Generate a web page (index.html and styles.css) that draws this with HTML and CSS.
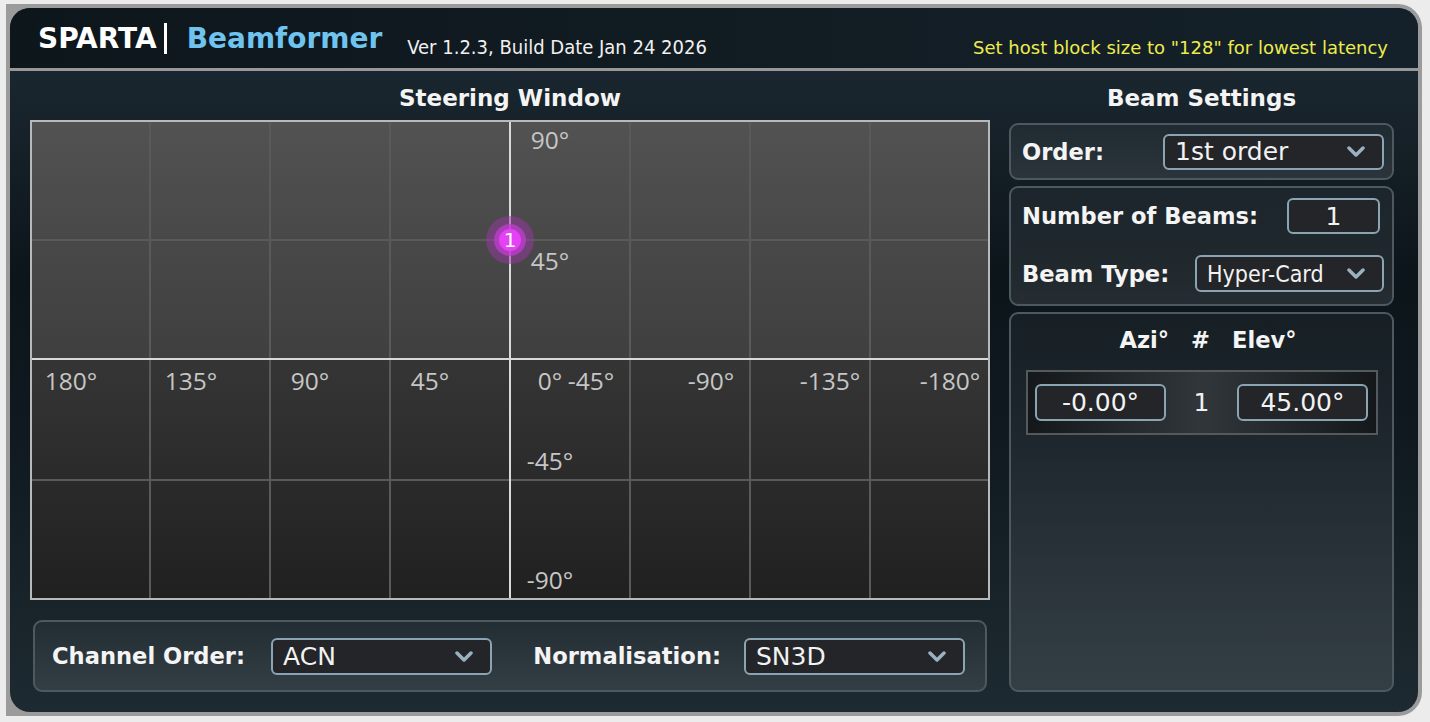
FILE: index.html
```html
<!DOCTYPE html>
<html lang="en">
<head>
    <meta charset="UTF-8">
    <title>SPARTA Beamformer</title>
    <link rel="stylesheet" href="styles.css">
</head>
<body>
    <div class="window">
        <div class="app">
            <!-- Title bar -->
            <header class="titlebar">
                <div class="brand">
                    <span class="sparta">SPARTA</span>
                    <span class="bar"></span>
                    <span class="plugin">Beamformer</span>
                    <span class="version">Ver 1.2.3, Build Date Jan 24 2026</span>
                </div>
                <div class="hint">Set host block size to "128" for lowest latency</div>
            </header>

            <main class="content">
                <!-- Steering window -->
                <section class="steering">
                    <h2>Steering Window</h2>
                    <svg class="sphere" width="960" height="480" viewBox="0 0 960 480">
                        <defs>
                            <linearGradient id="upper" x1="0" y1="0" x2="0" y2="1">
                                <stop offset="0" stop-color="#525252"/>
                                <stop offset="1" stop-color="#3f3f3f"/>
                            </linearGradient>
                            <linearGradient id="lower" x1="0" y1="0" x2="0" y2="1">
                                <stop offset="0" stop-color="#353535"/>
                                <stop offset="1" stop-color="#202020"/>
                            </linearGradient>
                        </defs>
                        <rect x="0" y="0" width="960" height="240" fill="url(#upper)"/>
                        <rect x="0" y="240" width="960" height="240" fill="url(#lower)"/>
                        <g stroke="#5a5a5a" stroke-width="2">
                            <line x1="120" y1="0" x2="120" y2="480"/>
                            <line x1="240" y1="0" x2="240" y2="480"/>
                            <line x1="360" y1="0" x2="360" y2="480"/>
                            <line x1="600" y1="0" x2="600" y2="480"/>
                            <line x1="720" y1="0" x2="720" y2="480"/>
                            <line x1="840" y1="0" x2="840" y2="480"/>
                            <line x1="0" y1="120" x2="960" y2="120"/>
                            <line x1="0" y1="360" x2="960" y2="360"/>
                        </g>
                        <g stroke="#d9d9d9" stroke-width="2">
                            <line x1="480" y1="0" x2="480" y2="480"/>
                            <line x1="0" y1="239" x2="960" y2="239"/>
                        </g>
                        <rect x="1" y="1" width="958" height="478" fill="none" stroke="#b9b9b9" stroke-width="2"/>
                        <g class="axis-label" text-anchor="middle">
                            <text x="41" y="270">180°</text>
                            <text x="161" y="270">135°</text>
                            <text x="280" y="270">90°</text>
                            <text x="400" y="270">45°</text>
                            <text x="520" y="270">0°</text>
                            <text x="561" y="270">-45°</text>
                            <text x="681" y="270">-90°</text>
                            <text x="800" y="270">-135°</text>
                            <text x="920" y="270">-180°</text>
                            <text x="520" y="29">90°</text>
                            <text x="520" y="150">45°</text>
                            <text x="520" y="350">-45°</text>
                            <text x="520" y="469">-90°</text>
                        </g>
                        <g class="beam">
                            <circle cx="480" cy="120" r="24" fill="#9a38a4" fill-opacity="0.5"/>
                            <circle cx="480" cy="120" r="16" fill="#c23cd2" fill-opacity="0.75"/>
                            <circle cx="480" cy="120" r="11" fill="#e442f4"/>
                            <text x="480" y="127" text-anchor="middle">1</text>
                        </g>
                    </svg>

                    <div class="panel io-panel">
                        <div class="field-group">
                            <span class="lbl">Channel Order:</span>
                            <div class="box combo wide gap-a">
                                <span>ACN</span>
                                <svg class="chev" width="18" height="11" viewBox="0 0 18 11"><path d="M2 2 L9 9 L16 2"/></svg>
                            </div>
                        </div>
                        <div class="field-group">
                            <span class="lbl">Normalisation:</span>
                            <div class="box combo wide gap-b">
                                <span>SN3D</span>
                                <svg class="chev" width="18" height="11" viewBox="0 0 18 11"><path d="M2 2 L9 9 L16 2"/></svg>
                            </div>
                        </div>
                    </div>
                </section>

                <!-- Beam settings -->
                <aside class="settings">
                    <h2>Beam Settings</h2>

                    <div class="panel order-panel">
                        <span class="lbl">Order:</span>
                        <div class="box combo wide short">
                            <span>1st order</span>
                            <svg class="chev" width="18" height="11" viewBox="0 0 18 11"><path d="M2 2 L9 9 L16 2"/></svg>
                        </div>
                    </div>

                    <div class="panel beams-panel">
                        <div class="row">
                            <span class="lbl">Number of Beams:</span>
                            <div class="box value num-box">1</div>
                        </div>
                        <div class="row">
                            <span class="lbl">Beam Type:</span>
                            <div class="box combo type-box">
                                <span class="narrow">Hyper-Card</span>
                                <svg class="chev" width="18" height="11" viewBox="0 0 18 11"><path d="M2 2 L9 9 L16 2"/></svg>
                            </div>
                        </div>
                    </div>

                    <div class="panel angles-panel">
                        <div class="angle-head">
                            <span>Azi°</span>
                            <span>#</span>
                            <span>Elev°</span>
                        </div>
                        <div class="angle-table">
                            <div class="box value angle-box">-0.00°</div>
                            <span class="beam-no">1</span>
                            <div class="box value angle-box">45.00°</div>
                        </div>
                    </div>
                </aside>
            </main>
        </div>
    </div>
</body>
</html>
```

FILE: styles.css
```css
body {
    margin: 0;
    padding: 4px 0 0 6px;
    background: #ececec;
    font-family: "DejaVu Sans", sans-serif;
    color: #f4f4f4;
}
.window {
    width: 1416px;
    height: 712px;
    box-sizing: border-box;
    padding: 4px;
    background: #9b9b9b;
    border-radius: 0 24px 24px 0;
}
.app {
    height: 100%;
    border-radius: 20px;
    overflow: hidden;
    display: flex;
    flex-direction: column;
    background: linear-gradient(180deg, #1f2c36 0%, #0c151a 38%, #0f191f 60%, #1e2a31 100%);
}

/* title bar */
.titlebar {
    height: 60px;
    flex: none;
    display: flex;
    align-items: center;
    justify-content: space-between;
    padding: 0 30px 0 28px;
    background: linear-gradient(90deg, #0d161b, #15212a);
    border-bottom: 3px solid #989898;
}
.brand {
    display: flex;
    align-items: center;
}
.sparta, .plugin {
    font-weight: bold;
    font-size: 28px;
}
.sparta {
    color: #fff;
}
.bar {
    width: 3px;
    height: 31px;
    background: #fff;
    margin: 0 20px 0 7px;
}
.plugin {
    color: #6fc3ef;
}
.version {
    font-family: "DejaVu Sans Condensed", "DejaVu Sans", sans-serif;
    font-stretch: condensed;
    font-size: 20px;
    color: #f0f0f0;
    margin: 17px 0 0 25px;
}
.hint {
    font-size: 18px;
    color: #ecec4e;
    margin-top: 18px;
}

/* main area */
.content {
    flex: 1;
    display: flex;
    gap: 19px;
    padding: 0 24px 20px 20px;
}
h2 {
    margin: 0;
    height: 49px;
    line-height: 54px;
    text-align: center;
    font-size: 23px;
    font-weight: bold;
    color: #f4f4f4;
}
.steering {
    width: 960px;
    display: flex;
    flex-direction: column;
}
.sphere {
    display: block;
}
.axis-label {
    font-family: "Open Sans", sans-serif;
    font-size: 24.5px;
    fill: #c6c6c6;
}
.beam text {
    font-family: "DejaVu Sans", sans-serif;
    font-size: 20px;
    fill: #fff;
}

.panel {
    box-sizing: border-box;
    border: 2px solid #4d585f;
    border-radius: 9px;
    background: linear-gradient(180deg, rgba(255, 255, 255, 0.04), rgba(255, 255, 255, 0.1));
}
.lbl {
    font-size: 22.6px;
    font-weight: bold;
    color: #f4f4f4;
    white-space: nowrap;
}

/* boxes and combos */
.box {
    box-sizing: border-box;
    height: 37px;
    display: flex;
    align-items: center;
    border: 2px solid #8ba4b3;
    border-radius: 6px;
    background: #232529;
    color: #f2f2f2;
    font-size: 25px;
}
.combo {
    justify-content: space-between;
    padding: 0 17px 0 10px;
}
.value {
    justify-content: center;
}
.wide {
    width: 221px;
}
.short {
    height: 36px;
}
.narrow {
    font-family: "DejaVu Sans Condensed", "DejaVu Sans", sans-serif;
    font-stretch: condensed;
    font-size: 23px;
}
.chev path {
    fill: none;
    stroke: #9ab1bf;
    stroke-width: 3.5;
    stroke-linecap: round;
    stroke-linejoin: round;
}

/* bottom bar */
.io-panel {
    margin: 20px 3px 0;
    height: 72px;
    display: flex;
    align-items: center;
    justify-content: space-between;
    padding: 0 20px 0 17px;
}
.field-group {
    display: flex;
    align-items: center;
}
.gap-a {
    margin-left: 26px;
}
.gap-b {
    margin-left: 23px;
}

/* right column */
.settings {
    flex: 1;
    display: flex;
    flex-direction: column;
    gap: 6px;
}
.settings h2 {
    height: 46px;
}
.order-panel {
    height: 57px;
    flex: none;
    display: flex;
    align-items: center;
    justify-content: space-between;
    padding: 0 8px 0 11px;
}
.beams-panel {
    height: 120px;
    flex: none;
    display: flex;
    flex-direction: column;
    gap: 21px;
    padding: 10px 8px 12px 11px;
}
.row {
    display: flex;
    align-items: center;
    justify-content: space-between;
}
.num-box {
    width: 93px;
    height: 36px;
    margin-right: 4px;
}
.type-box {
    width: 189px;
}
.angles-panel {
    flex: 1;
    padding: 0 14px 0 15px;
}
.angle-head {
    height: 52px;
    display: flex;
    align-items: center;
    justify-content: center;
    gap: 22px;
    padding-left: 12px;
    font-size: 22.6px;
    font-weight: bold;
}
.angle-table {
    margin-top: 4px;
    height: 65px;
    box-sizing: border-box;
    border: 2px solid #54595d;
    padding: 0 8px 0 7px;
    display: flex;
    align-items: center;
    justify-content: space-between;
    background: linear-gradient(90deg, #14181b, #30363a 50%, #14181b);
}
.angle-box {
    width: 131px;
}
.beam-no {
    font-size: 25px;
    color: #f2f2f2;
}
```
